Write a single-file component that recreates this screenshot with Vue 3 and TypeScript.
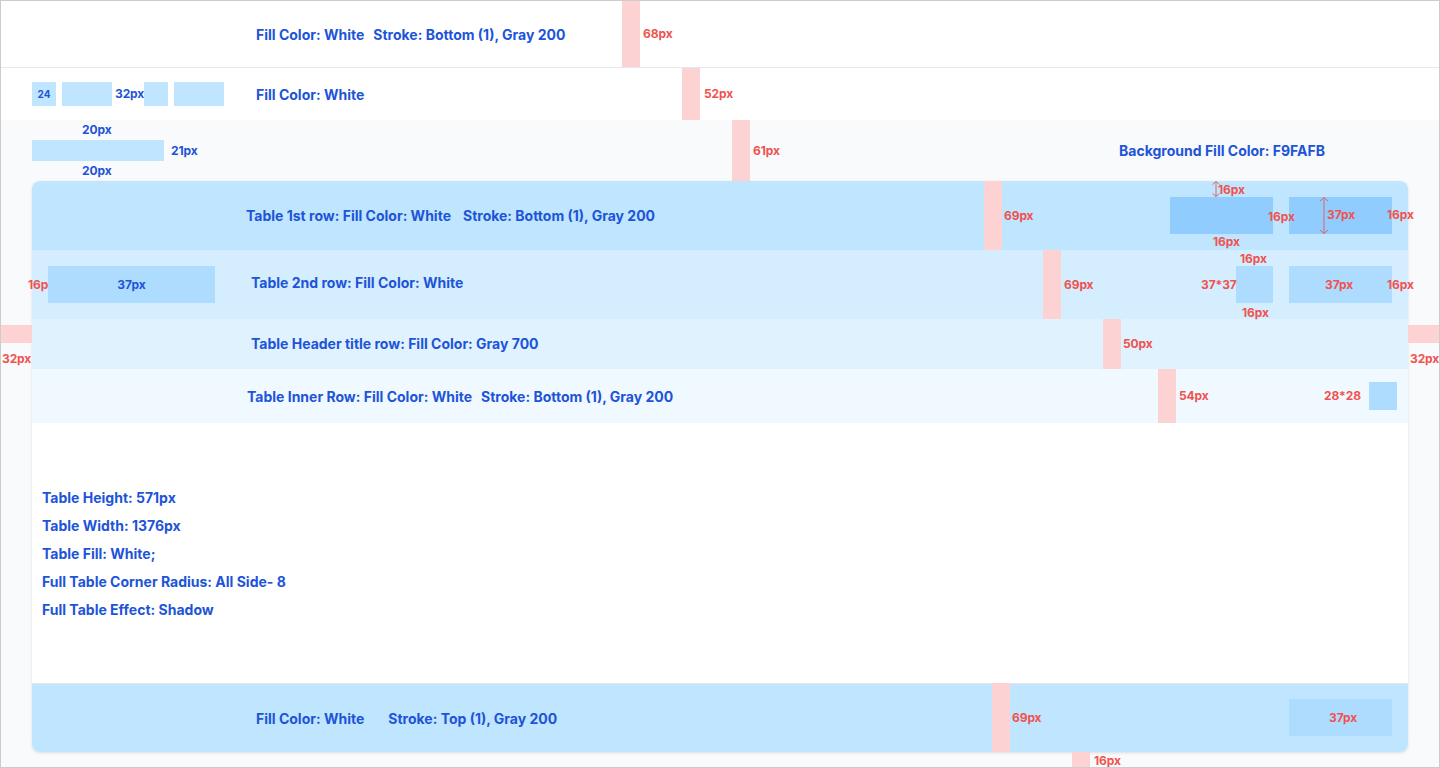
<template>
  <div class="frame">
    <header class="topbar">
      <span class="note low">Fill Color: White</span>
      <span class="note low">Stroke: Bottom (1), Gray 200</span>
    </header>

    <nav class="navbar">
      <div class="nav-blocks">
        <div class="block-nav small">24</div>
        <div class="block-nav wide"></div>
        <span class="note nav-gap">32px</span>
        <div class="block-nav small"></div>
        <div class="block-nav wide"></div>
      </div>
      <span class="note low">Fill Color: White</span>
    </nav>

    <main class="content">
      <div class="title-row">
        <div class="title-block"></div>
        <span class="note">Background Fill Color: F9FAFB</span>
      </div>

      <section class="table">
        <div class="row row-first">
          <div class="row-text first-text">
            <span class="note">Table 1st row: Fill Color: White</span>
            <span class="note">Stroke: Bottom (1), Gray 200</span>
          </div>
          <div class="row-actions">
            <div class="btn strong"></div>
            <div class="btn strong"></div>
          </div>
        </div>

        <div class="row row-second">
          <div class="btn search">
            <span class="note search-note">37px</span>
          </div>
          <div class="row-text second-text">
            <span class="note">Table 2nd row: Fill Color: White</span>
          </div>
          <div class="row-actions">
            <div class="btn square"></div>
            <div class="btn"></div>
          </div>
        </div>

        <div class="row row-header">
          <div class="row-text header-text">
            <span class="note">Table Header title row: Fill Color: Gray 700</span>
          </div>
        </div>

        <div class="row row-inner">
          <div class="row-text inner-text">
            <span class="note low">Table Inner Row: Fill Color: White</span>
            <span class="note low">Stroke: Bottom (1), Gray 200</span>
          </div>
          <div class="icon-btn"></div>
        </div>

        <div class="table-body">
          <p v-for="line in specLines" :key="line" class="note">{{ line }}</p>
        </div>

        <div class="row row-footer">
          <div class="row-text footer-text">
            <span class="note low">Fill Color: White</span>
            <span class="note low">Stroke: Top (1), Gray 200</span>
          </div>
          <div class="row-actions">
            <div class="btn"></div>
          </div>
        </div>
      </section>
    </main>

    <!-- measurement marks sit on top of the page -->
    <div class="overlay">
      <div
        v-for="m in marks"
        :key="m.x + '-' + m.y"
        class="mark"
        :style="{ left: m.x + 'px', top: m.y + 'px', width: m.w + 'px', height: m.h + 'px' }"
      ></div>
      <span
        v-for="l in labels"
        :key="l.x + '-' + l.y"
        class="label"
        :class="{ blue: l.blue }"
        :style="{ left: l.x + 'px', top: l.y + 'px' }"
      >{{ l.text }}</span>
      <svg class="arrow arrow-small" viewBox="0 0 10 16" fill="none">
        <path d="M5 0.5V15.5M1.5 3.5L5 0.5L8.5 3.5M1.5 12.5L5 15.5L8.5 12.5" />
      </svg>
      <svg class="arrow arrow-large" viewBox="0 0 10 37" fill="none">
        <path d="M5 0.5V36.5M1 4L5 0.5L9 4M1 33L5 36.5L9 33" />
      </svg>
    </div>
  </div>
</template>

<script setup lang="ts">
interface Mark {
  x: number;
  y: number;
  w: number;
  h: number;
}

interface Label {
  text: string;
  x: number;
  y: number;
  blue?: boolean;
}

const specLines: string[] = [
  'Table Height: 571px',
  'Table Width: 1376px',
  'Table Fill: White;',
  'Full Table Corner Radius: All Side- 8',
  'Full Table Effect: Shadow',
];

const marks: Mark[] = [
  { x: 622, y: 1, w: 18, h: 66 },
  { x: 682, y: 68, w: 18, h: 52 },
  { x: 732, y: 120, w: 18, h: 61 },
  { x: 984, y: 181, w: 18, h: 69 },
  { x: 1043, y: 250, w: 18, h: 69 },
  { x: 1103, y: 319, w: 18, h: 50 },
  { x: 1158, y: 369, w: 18, h: 54 },
  { x: 992, y: 683, w: 18, h: 69 },
  { x: 1072, y: 752, w: 18, h: 15 },
  { x: 1, y: 325, w: 31, h: 18 },
  { x: 1408, y: 325, w: 31, h: 18 },
];

const labels: Label[] = [
  { text: '68px', x: 643, y: 34 },
  { text: '52px', x: 704, y: 94 },
  { text: '61px', x: 753, y: 151 },
  { text: '69px', x: 1004, y: 216 },
  { text: '69px', x: 1064, y: 285 },
  { text: '50px', x: 1123, y: 344 },
  { text: '54px', x: 1179, y: 396 },
  { text: '69px', x: 1012, y: 718 },
  { text: '16px', x: 1094, y: 761 },
  { text: '32px', x: 2, y: 359 },
  { text: '32px', x: 1410, y: 359 },
  { text: '16px', x: 1218, y: 190 },
  { text: '16px', x: 1268, y: 217 },
  { text: '37px', x: 1327, y: 215 },
  { text: '16px', x: 1387, y: 215 },
  { text: '16px', x: 1213, y: 242 },
  { text: '16px', x: 1240, y: 259 },
  { text: '37*37', x: 1201, y: 285 },
  { text: '37px', x: 1325, y: 285 },
  { text: '16px', x: 1387, y: 285 },
  { text: '16px', x: 1242, y: 313 },
  { text: '16px', x: 28, y: 285 },
  { text: '28*28', x: 1324, y: 396 },
  { text: '37px', x: 1329, y: 718 },
  { text: '20px', x: 82, y: 130, blue: true },
  { text: '21px', x: 171, y: 151, blue: true },
  { text: '20px', x: 82, y: 171, blue: true },
];
</script>

<style scoped>
.frame {
  position: relative;
  box-sizing: border-box;
  width: 1440px;
  height: 768px;
  display: flex;
  flex-direction: column;
  overflow: hidden;
  background-color: #f9fafb;
  border: 1px solid #cccccc;
  font-family: Inter, 'Liberation Sans', sans-serif;
}

.note {
  margin: 0;
  color: #1d54d8;
  font-size: 14px;
  font-weight: 700;
  line-height: 18px;
  white-space: nowrap;
}

.note.low {
  margin-top: 2px;
}

.topbar {
  box-sizing: border-box;
  height: 67px;
  flex-shrink: 0;
  display: flex;
  align-items: center;
  gap: 9px;
  padding-left: 255px;
  background-color: #fff;
  border-bottom: 1px solid #e5e7eb;
}

.navbar {
  height: 52px;
  flex-shrink: 0;
  display: flex;
  align-items: center;
  gap: 32px;
  padding-left: 31px;
  background-color: #fff;
}

.nav-blocks {
  display: flex;
  align-items: center;
}

.block-nav {
  height: 24px;
  background-color: #c0e5fe;
  color: #1d54d8;
  font-size: 10px;
  font-weight: 700;
  line-height: 24px;
  text-align: center;
}

.block-nav.small {
  width: 24px;
  margin-right: 6px;
}

.block-nav.wide {
  width: 50px;
}

.nav-gap {
  width: 32px;
  padding-left: 3px;
  box-sizing: border-box;
  font-size: 12px;
  letter-spacing: -0.1px;
}

.content {
  padding: 20px 31px 0;
  display: flex;
  flex-direction: column;
  gap: 20px;
}

.title-row {
  height: 21px;
  display: flex;
  align-items: center;
  justify-content: space-between;
  padding-right: 83px;
}

.title-block {
  width: 132px;
  height: 21px;
  background-color: #c0e5fe;
}

.table {
  width: 1376px;
  height: 571px;
  flex-shrink: 0;
  display: flex;
  flex-direction: column;
  border-radius: 8px;
  background-color: #fff;
  box-shadow: 0 1px 3px rgba(0, 0, 0, 0.12);
}

.row {
  box-sizing: border-box;
  flex-shrink: 0;
  display: flex;
  align-items: center;
  justify-content: space-between;
  padding: 0 16px;
}

.row-first {
  height: 69px;
  background-color: #c0e5fe;
  border-radius: 8px 8px 0 0;
}

.row-second {
  height: 69px;
  background-color: #d4edff;
}

.row-header {
  height: 50px;
  background-color: #e0f2fe;
}

.row-inner {
  height: 54px;
  padding-right: 11px;
  background-color: #f0f9ff;
}

.row-footer {
  height: 69px;
  background-color: #c0e5fe;
  box-shadow: inset 0 1px 0 #e5e7eb;
  border-radius: 0 0 8px 8px;
}

.row-text {
  display: flex;
  align-items: center;
  flex: 1;
}

.first-text {
  gap: 12px;
  padding-left: 198px;
}

.second-text {
  padding-left: 36px;
  padding-bottom: 4px;
}

.header-text {
  padding-left: 203px;
}

.inner-text {
  gap: 9px;
  padding-left: 199px;
}

.footer-text {
  gap: 24px;
  padding-left: 208px;
}

.row-actions {
  display: flex;
  gap: 16px;
}

.btn {
  width: 103px;
  height: 37px;
  background-color: #aedcfe;
}

.btn.strong {
  background-color: #90cdfe;
}

.btn.square {
  width: 37px;
}

.btn.search {
  position: relative;
  z-index: 2;
  width: 167px;
  display: flex;
  align-items: center;
  justify-content: center;
}

.search-note {
  font-size: 12px;
}

.icon-btn {
  width: 28px;
  height: 28px;
  background-color: #aedcfe;
}

.table-body {
  flex: 1;
  display: flex;
  flex-direction: column;
  justify-content: center;
  gap: 10px;
  padding-top: 2px;
  padding-left: 10px;
}

.overlay {
  position: absolute;
  inset: -1px;
  pointer-events: none;
}

.mark {
  position: absolute;
  background-color: #fdd2d2;
}

.label {
  position: absolute;
  transform: translateY(-50%);
  color: #ef5350;
  font-size: 12px;
  font-weight: 700;
  line-height: 16px;
  letter-spacing: -0.1px;
  white-space: nowrap;
}

.label.blue {
  color: #1d54d8;
}

.arrow {
  position: absolute;
  stroke: #e0626a;
  stroke-width: 1;
}

.arrow-small {
  left: 1211px;
  top: 181px;
  width: 10px;
  height: 16px;
}

.arrow-large {
  left: 1319px;
  top: 197px;
  width: 10px;
  height: 37px;
}
</style>
